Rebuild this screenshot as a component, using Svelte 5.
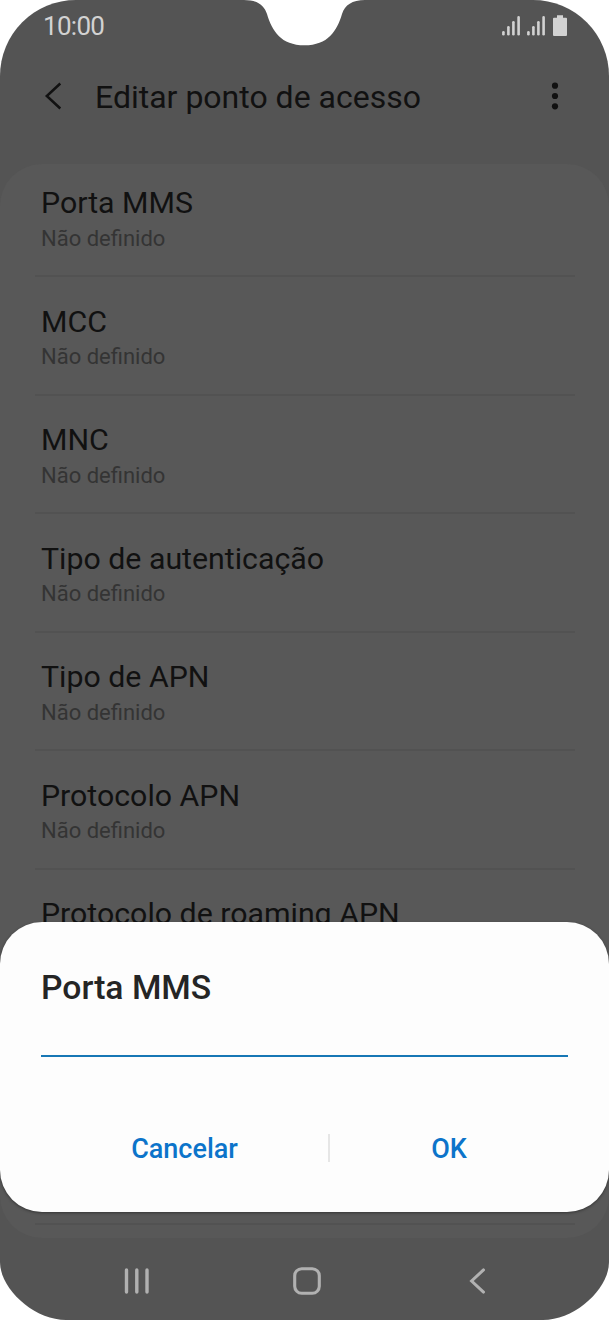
<script>
	let value = $state('');

	const settings = [
		{ id: 1, name: 'Porta MMS', value: 'Não definido' },
		{ id: 2, name: 'MCC', value: 'Não definido' },
		{ id: 3, name: 'MNC', value: 'Não definido' },
		{ id: 4, name: 'Tipo de autenticação', value: 'Não definido' },
		{ id: 5, name: 'Tipo de APN', value: 'Não definido' },
		{ id: 6, name: 'Protocolo APN', value: 'Não definido' },
		{ id: 7, name: 'Protocolo de roaming APN', value: '' }
	];

	//x, top of each signal bar
	const bars = [[1.4, 13], [6.4, 8], [11.4, 3], [16.6, -1.9]];
</script>

<div class="phone">
	<svg class="notch" width="130" height="47" viewBox="0 0 130 47">
		<path d="M4 0C17 0 24 5 27 14C32 31 41 45.3 64.5 45.3C88 45.3 97 31 102 14C105 5 112 0 125 0Z" fill="#fff" />
	</svg>

	<div class="status">
		<span class="time">10:00</span>
		<div class="indicators">
			{#each [1, 2] as sim (sim)}
				<svg width="19" height="24" viewBox="0 -4 19 24">
					{#each bars as [x, y]}
						<path d="M{x} {y + 1.3}V16.2" stroke="#d2d2d2" stroke-width="2.6" stroke-linecap="round" />
					{/each}
				</svg>
			{/each}
			<svg class="battery" width="14" height="22" viewBox="0 0 14 22">
				<path d="M4 0.2h6v2.5h3a1 1 0 0 1 1 1v16.2a1 1 0 0 1-1 1h-12a1 1 0 0 1-1-1v-16.2a1 1 0 0 1 1-1h3z" fill="#d2d2d2" />
			</svg>
		</div>
	</div>

	<header>
		<svg width="18" height="28" viewBox="0 0 18 28">
			<path d="M16.3 1.5L2.8 14L16.3 26.5" fill="none" stroke="#111" stroke-width="2.5" />
		</svg>
		<h1>Editar ponto de acesso</h1>
		<svg class="more" width="8" height="28" viewBox="0 0 8 28">
			<circle cx="4" cy="3.7" r="3.1" fill="#111" />
			<circle cx="4" cy="14" r="3.1" fill="#111" />
			<circle cx="4" cy="24.3" r="3.1" fill="#111" />
		</svg>
	</header>

	<ul>
		{#each settings as setting (setting.id)}
			<li>
				<span class="name">{setting.name}</span>
				<span class="value">{setting.value}</span>
			</li>
		{/each}
		<li class="rest"></li>
	</ul>

	<nav>
		<svg width="26" height="28" viewBox="0 0 26 28">
			<path d="M2.5 3V25M12.8 3V25M23 3V25" stroke="#b1b1b1" stroke-width="3.4" stroke-linecap="round" />
		</svg>
		<svg class="home" width="28" height="28" viewBox="0 0 28 28">
			<rect x="1.7" y="1.7" width="24.6" height="24.6" rx="7" fill="none" stroke="#b1b1b1" stroke-width="3.1" />
		</svg>
		<svg width="18" height="28" viewBox="0 0 18 28">
			<path d="M14.5 2.9L2.6 14L14.5 25.1" fill="none" stroke="#b1b1b1" stroke-width="3" stroke-linecap="round" />
		</svg>
	</nav>

	<div class="dialog">
		<h2>Porta MMS</h2>
		<input bind:value aria-label="Porta MMS">
		<div class="buttons">
			<button class="cancel" onclick={() => (value = '')}>Cancelar</button>
			<span class="split"></span>
			<button class="ok">OK</button>
		</div>
	</div>
</div>

<style>
	:global(body) {
		background: #fff;
	}

	.phone {
		position: relative;
		display: flex;
		flex-direction: column;
		width: 609px;
		height: 1320px;
		overflow: hidden;
		border-radius: 76px 76px 0 0;
		/* the bottom corners are flatter than a circle */
		clip-path: path('M0 0H609V1262C609 1289 575 1320 543 1320H66C34 1320 0 1289 0 1262Z');
		background: #545454;
		font-family: Roboto, sans-serif;
	}

	svg {
		display: block;
		flex: none;
	}

	.notch {
		position: absolute;
		left: 240px;
		top: 0;
	}

	.status {
		display: flex;
		justify-content: space-between;
		align-items: center;
		height: 52px;
		padding: 0 42px 0 43px;
	}

	.time {
		font-size: 26px;
		letter-spacing: -0.7px;
		color: #d2d2d2;
	}

	.indicators {
		display: flex;
		align-items: center;
		gap: 6px;
	}

	.battery {
		margin-left: 1px;
	}

	header {
		display: flex;
		align-items: center;
		height: 88px;
		margin-bottom: 24px;
		padding: 0 50px 0 44px;
		color: #111;
	}

	h1 {
		flex: 1;
		margin: 2px 0 0 33px;
		font-size: 32px;
		font-weight: 400;
		line-height: 40px;
	}

	ul {
		height: 1074px;
		margin: 0;
		padding: 0 34px 0 35px;
		box-sizing: border-box;
		border-radius: 42px;
		background: #585858;
		list-style: none;
	}

	li {
		display: flex;
		flex-direction: column;
		height: 118.5px;
		padding: 23.5px 6px 0;
		box-sizing: border-box;
		border-bottom: 2px solid #525252;
	}

	li:first-child {
		height: 113.4px;
		padding-top: 18.4px;
	}

	.name {
		font-size: 30.3px;
		line-height: 42px;
		color: #111;
	}

	.value {
		margin-top: 0.4px;
		font-size: 22px;
		line-height: 28px;
		color: #343434;
	}

	.rest {
		height: 237px;
	}

	nav {
		display: flex;
		justify-content: space-between;
		height: 82px;
		padding: 29px 122px 0 124px;
		box-sizing: border-box;
	}

	.home {
		margin: 0 3px 0 -3px;
	}

	.dialog {
		position: absolute;
		left: 0;
		right: 0;
		top: 922px;
		display: flex;
		flex-direction: column;
		height: 290px;
		padding: 45px 41px 0;
		box-sizing: border-box;
		border-radius: 42px;
		background: #fdfdfd;
		box-shadow: 0 1px 3px #0006;
	}

	h2 {
		margin: 0;
		font-size: 33.7px;
		font-weight: 500;
		line-height: 42px;
		color: #252525;
	}

	input {
		height: 48px;
		padding: 0;
		box-sizing: border-box;
		border: none;
		border-bottom: 2px solid #1777b5;
		background: none;
		font: 28px Roboto, sans-serif;
		outline: none;
	}

	.buttons {
		display: grid;
		grid-template-columns: 287px 2px 1fr;
		align-items: center;
		margin-top: 71px;
	}

	button {
		height: 40px;
		padding: 1px 0 0;
		border: none;
		background: none;
		font: 500 27px Roboto, sans-serif;
		color: #0c74ca;
	}

	.split {
		height: 28px;
		background: #e6e6e6;
	}
</style>
